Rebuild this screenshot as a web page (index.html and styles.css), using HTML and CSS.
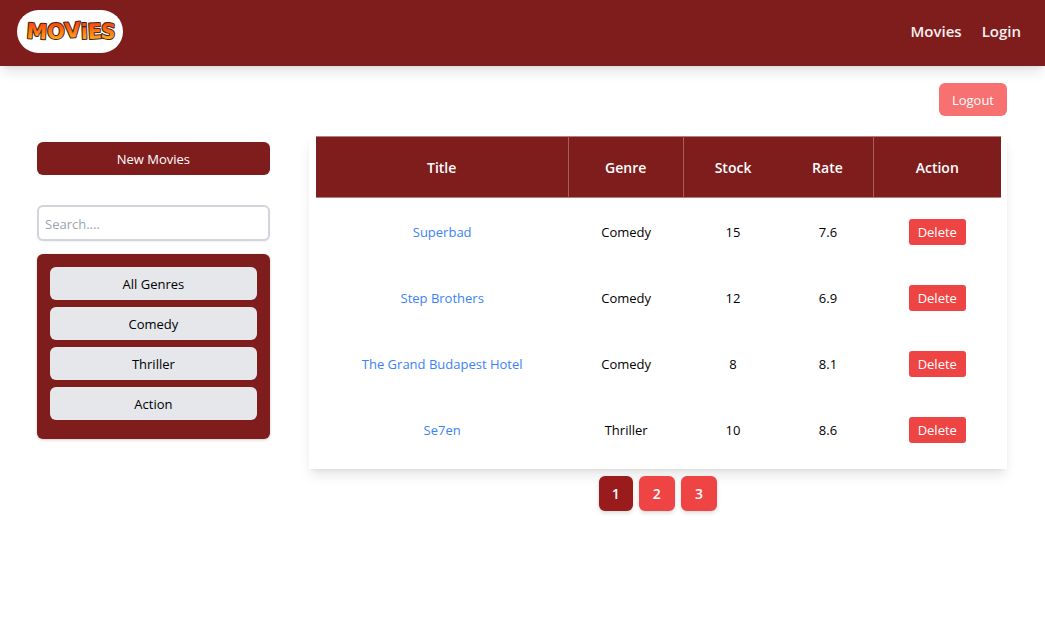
FILE: index.html
```html
<!DOCTYPE html>
<html lang="en">
<head>
<meta charset="utf-8">
<meta name="viewport" content="width=device-width, initial-scale=1">
<title>Movies</title>
<link rel="stylesheet" href="styles.css">
</head>
<body>
<header class="navbar">
  <a class="logo" href="#" aria-label="Movies home">
    <svg class="logo-art" viewBox="0 0 106 43" aria-hidden="true">
      <defs>
        <linearGradient id="flame" gradientUnits="userSpaceOnUse" x1="0" y1="12" x2="0" y2="31">
          <stop offset="0.1" stop-color="#ff4a0c"/>
          <stop offset="0.5" stop-color="#ff7a10"/>
          <stop offset="1" stop-color="#ffb31a"/>
        </linearGradient>
      </defs>
      <text class="logo-text" x="9 30 48 64 71 83" y="28 29 28 29 29 28" rotate="4 0 -4 -2 -3 5">MOViES</text>
    </svg>
  </a>
  <nav class="nav-links">
    <a href="#">Movies</a>
    <a href="#">Login</a>
  </nav>
</header>
<main class="page">
  <div class="toolbar"><button class="btn logout" type="button">Logout</button></div>
  <div class="content">
    <aside class="sidebar">
      <button class="btn new-movie" type="button">New Movies</button>
      <input class="search" type="search" placeholder="Search...." aria-label="Search movies">
      <div class="genres">
        <button class="btn genre" type="button">All Genres</button>
        <button class="btn genre" type="button">Comedy</button>
        <button class="btn genre" type="button">Thriller</button>
        <button class="btn genre" type="button">Action</button>
      </div>
    </aside>
    <section class="results">
      <div class="card">
        <table class="movies">
          <colgroup><col class="col-title"><col class="col-genre"><col class="col-stock"><col class="col-rate"><col class="col-action"></colgroup>
          <thead>
            <tr><th class="ruled">Title</th><th class="ruled">Genre</th><th>Stock</th><th class="ruled">Rate</th><th>Action</th></tr>
          </thead>
          <tbody>
            <tr><td><a href="#">Superbad</a></td><td>Comedy</td><td>15</td><td>7.6</td><td><button class="delete" type="button">Delete</button></td></tr>
            <tr><td><a href="#">Step Brothers</a></td><td>Comedy</td><td>12</td><td>6.9</td><td><button class="delete" type="button">Delete</button></td></tr>
            <tr><td><a href="#">The Grand Budapest Hotel</a></td><td>Comedy</td><td>8</td><td>8.1</td><td><button class="delete" type="button">Delete</button></td></tr>
            <tr><td><a href="#">Se7en</a></td><td>Thriller</td><td>10</td><td>8.6</td><td><button class="delete" type="button">Delete</button></td></tr>
          </tbody>
        </table>
      </div>
      <nav class="pager" aria-label="Pages">
        <button class="page-btn current" type="button" aria-current="page">1</button>
        <button class="page-btn" type="button">2</button>
        <button class="page-btn" type="button">3</button>
      </nav>
    </section>
  </div>
</main>
</body>
</html>
```

FILE: styles.css
```css
* { box-sizing: border-box; }
body {
  margin: 0;
  background: #fff;
  color: #000;
  font-family: "Open Sans", "Noto Sans", sans-serif;
  font-size: 13px;
  line-height: 20px;
}
a { text-decoration: none; }
button, input { font: inherit; margin: 0; }
button { border: 0; cursor: pointer; }

.navbar {
  display: flex;
  align-items: center;
  justify-content: space-between;
  padding: 10px 24px 13px 17px;
  background: #7f1d1d;
  box-shadow: 0 8px 12px -2px rgba(0, 0, 0, 0.1), 0 3px 5px -3px rgba(0, 0, 0, 0.1);
}
.logo {
  display: block;
  width: 106px;
  height: 43px;
  border-radius: 22px;
  background: #fff;
}
.logo-art { display: block; width: 100%; height: 100%; }
.logo-text {
  fill: url(#flame);
  stroke: #3a2416;
  stroke-width: 2px;
  stroke-linejoin: round;
  paint-order: stroke;
  font-family: "DejaVu Sans", sans-serif;
  font-size: 21px;
  font-weight: 700;
}
.nav-links { display: flex; gap: 20px; padding-bottom: 2px; }
.nav-links a { color: #f9f0f0; font-size: 15px; font-weight: 600; }

.page { padding: 17px 38px 24px 37px; }
.toolbar { display: flex; justify-content: flex-end; margin-bottom: 20px; }
.btn { padding: 7px 13px 6px; border-radius: 6px; }
.logout { background: #f87171; color: #fff; }

.content {
  display: grid;
  grid-template-columns: minmax(0, 1fr) minmax(0, 3fr);
  gap: 39px;
  align-items: start;
}
.sidebar { display: flex; flex-direction: column; padding-top: 6px; }
.new-movie { background: #7f1d1d; color: #fff; }
.search {
  width: 100%;
  height: 36px;
  margin: 30px 0 13px;
  padding: 2px 6px 0;
  border: 2px solid #d1d5db;
  border-radius: 6px;
  background: #fff;
  box-shadow: 0 1px 2px rgba(0, 0, 0, 0.06);
}
.search::placeholder { color: #9ca3af; opacity: 1; }
.genres {
  display: flex;
  flex-direction: column;
  gap: 7px;
  padding: 13px 13px 19px;
  border-radius: 6px;
  background: #7f1d1d;
  box-shadow: 0 1px 3px rgba(0, 0, 0, 0.2);
}
.genre { background: #e5e7eb; color: #000; }

.card {
  padding: 0 6px 7px 7px;
  background: #fff;
  box-shadow: 0 8px 12px -2px rgba(0, 0, 0, 0.1), 0 3px 5px -3px rgba(0, 0, 0, 0.1);
}
.movies {
  width: 100%;
  table-layout: fixed;
  border-collapse: separate;
  border-spacing: 0;
  text-align: center;
}
.col-title { width: 36.9%; }
.col-genre { width: 16.8%; }
.col-stock { width: 14.4%; }
.col-rate { width: 13.3%; }
.col-action { width: 18.6%; }
.movies th {
  height: 62px;
  padding: 2px 0 0;
  border-top: 1px solid #b58080;
  border-bottom: 1px solid #b58080;
  background: #7f1d1d;
  color: #fff;
  font-size: 14px;
  font-weight: 600;
}
.movies th.ruled { border-right: 1px solid #a85c5c; }
.movies td { height: 66px; padding: 2px 0 0; }
.movies td a { color: #3b82f6; }
.delete {
  padding: 3px 9px;
  border-radius: 3px;
  background: #ef4444;
  color: #fff;
}
.pager { display: flex; justify-content: center; gap: 6px; margin-top: 7px; }
.page-btn {
  padding: 8px 14px 7px;
  border-radius: 6px;
  background: #ef4444;
  color: #fff;
  font-size: 14px;
  font-weight: 600;
  box-shadow: 0 2px 4px rgba(0, 0, 0, 0.15);
}
.page-btn.current { background: #991b1b; padding: 8px 13px 7px; }
```
